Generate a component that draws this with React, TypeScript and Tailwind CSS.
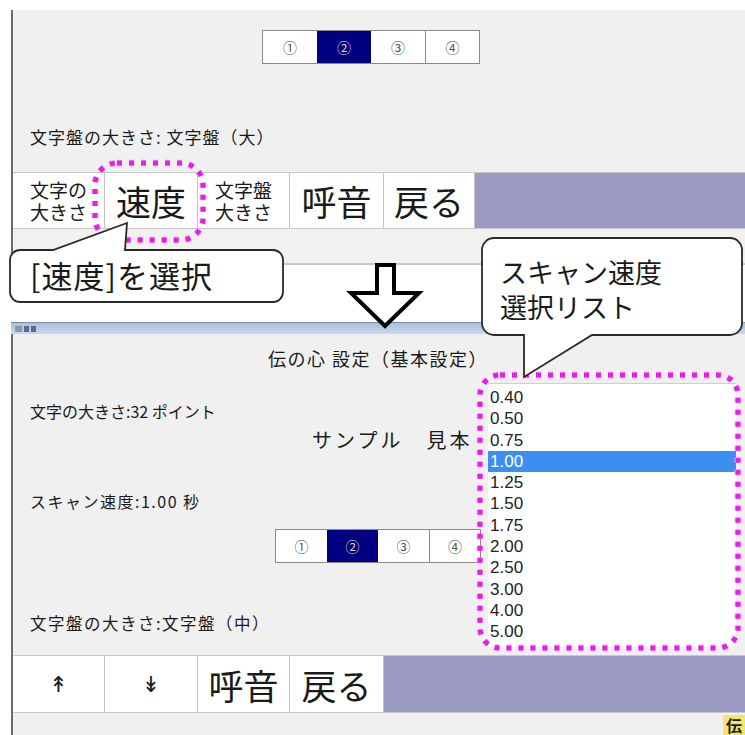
import React from "react";

const jp = { fontFamily: '"Noto Sans CJK JP", "Noto Sans", sans-serif' };
const num = { fontFamily: '"Liberation Sans", Arial, sans-serif' };

function Segmented({ cellW }: { cellW: string }) {
  const items = ["①", "②", "③", "④"];
  return (
    <div className="flex border border-[#8a8a8a] bg-white h-[34px] w-fit">
      {items.map((t, i) => (
        <div
          key={t}
          className={
            (i === 1
              ? "bg-[#000080] text-[#e6dca8] "
              : "bg-white text-[#555] ") +
            (i === 3 ? "border-l border-[#8a8a8a] " : "") +
            cellW +
            " h-full flex items-center justify-center text-[14px]"
          }
          style={jp}
        >
          {t}
        </div>
      ))}
    </div>
  );
}

function Btn({ w, children }: { w: string; children: React.ReactNode }) {
  return (
    <div
      className={
        w +
        " h-full bg-white border-r border-[#c4c4c4] flex items-center justify-center text-[#1a1a1a] shrink-0"
      }
      style={jp}
    >
      {children}
    </div>
  );
}

export default function App() {
  const values = [
    "0.40",
    "0.50",
    "0.75",
    "1.00",
    "1.25",
    "1.50",
    "1.75",
    "2.00",
    "2.50",
    "3.00",
    "4.00",
    "5.00",
  ];
  return (
    <div className="relative w-[745px] h-[735px] bg-white overflow-hidden text-[#1a1a1a]" style={jp}>
      {/* Window 1 */}
      <div className="pt-[10px] pl-[11px]">
        <div className="border-l-2 border-[#6b6b6b] bg-[#f0f0f0] h-[255px] flex flex-col border-b-2 border-b-[#c2c6ce]">
          <div className="mt-[20px] pl-[249px]">
            <Segmented cellW="w-[54px]" />
          </div>
          <div className="mt-[63px] pl-[17px] h-[20px] leading-[20px] text-[17px] tracking-[1px]">
            文字盤の大きさ: 文字盤（大）
          </div>
          <div className="mt-[25px] h-[57px] flex border-y border-[#c8c8c8]">
            <Btn w="w-[92px]">
              <div className="text-[19px] leading-[22px] text-center">
                文字の
                <br />
                大きさ
              </div>
            </Btn>
            <Btn w="w-[93px]">
              <span className="text-[35px] leading-none">速度</span>
            </Btn>
            <Btn w="w-[92px]">
              <div className="text-[19px] leading-[22px] text-center">
                文字盤
                <br />
                大きさ
              </div>
            </Btn>
            <Btn w="w-[94px]">
              <span className="text-[35px] leading-none">呼音</span>
            </Btn>
            <Btn w="w-[91px]">
              <span className="text-[35px] leading-none">戻る</span>
            </Btn>
            <div className="flex-1 bg-[#9b9ac2]" />
          </div>
          <div className="flex-1 bg-[#f3f0f0]" />
        </div>
      </div>

      {/* gap */}
      <div className="h-[57px]" />

      {/* Window 2 */}
      <div className="pl-[11px]">
        <div className="h-[12px] border-t border-[#7d8ca4] bg-gradient-to-b from-[#a9bfdc] to-[#c9d8ec] flex items-center gap-[2px] pl-[4px]">
          <div className="w-[7px] h-[6px] bg-[#8c98a8]" />
          <div className="w-[5px] h-[6px] bg-[#5a6a90]" />
          <div className="w-[5px] h-[6px] bg-[#5a6a90]" />
        </div>
        <div className="border-l-2 border-[#6b6b6b] bg-[#f0f0f0] h-[401px] flex flex-col">
          <div className="mt-[12px] pl-[255px] h-[24px] leading-[24px] text-[18px] tracking-[1.5px]">
            伝の心 設定（基本設定）
          </div>
          <div className="mt-[31px] pl-[17px] h-[20px] leading-[20px] text-[16px]">
            文字の大きさ:32 ポイント
          </div>
          <div className="mt-[6px] pl-[299px] h-[26px] leading-[26px] text-[20px] tracking-[3px]">
            サンプル　見本
          </div>
          <div className="mt-[38px] pl-[17px] h-[20px] leading-[20px] text-[16px] tracking-[1.5px]">
            スキャン速度:1.00 秒
          </div>
          <div className="mt-[18px] pl-[262px]">
            <Segmented cellW="w-[51px]" />
          </div>
          <div className="mt-[50px] pl-[17px] h-[20px] leading-[20px] text-[16.5px] tracking-[1.5px]">
            文字盤の大きさ:文字盤（中）
          </div>
          <div className="mt-[22px] h-[58px] flex border-y border-[#c8c8c8]">
            <Btn w="w-[92px]">
              <span className="text-[22px]" style={{ fontFamily: '"DejaVu Sans", sans-serif' }}>
                ↟
              </span>
            </Btn>
            <Btn w="w-[93px]">
              <span className="text-[22px]" style={{ fontFamily: '"DejaVu Sans", sans-serif' }}>
                ↡
              </span>
            </Btn>
            <Btn w="w-[92px]">
              <span className="text-[35px] leading-none">呼音</span>
            </Btn>
            <Btn w="w-[94px]">
              <span className="text-[35px] leading-none">戻る</span>
            </Btn>
            <div className="flex-1 bg-[#9b9ac2]" />
          </div>
          <div className="flex-1 flex justify-end items-end">
            <div className="bg-[#f3e56a] h-[20px] w-[22px] text-[16px] font-bold leading-[20px] text-center">
              伝
            </div>
          </div>
        </div>
      </div>

      {/* Dropdown list */}
      <div className="absolute left-[488px] top-[383px] w-[248px] h-[263px] bg-white border-t border-[#cfcfcf] pt-[3px]" style={num}>
        {values.map((v) => (
          <div
            key={v}
            className={
              (v === "1.00" ? "bg-[#3a8ff0] text-white " : "text-[#222] ") +
              "h-[21.3px] leading-[21.3px] text-[17px] pl-[2px]"
            }
          >
            {v}
          </div>
        ))}
      </div>

      {/* Annotations */}
      <svg className="absolute left-0 top-0 pointer-events-none" width="745" height="735" viewBox="0 0 745 735">
        <rect x="95" y="163" width="108" height="77" rx="22" fill="none" stroke="#f6b8f6" strokeWidth="7" strokeDasharray="5 7" />
        <rect x="95" y="163" width="108" height="77" rx="22" fill="none" stroke="#e81ce8" strokeWidth="5" strokeDasharray="5 7" />
        <rect x="480" y="375" width="258" height="273" rx="20" fill="none" stroke="#f6b8f6" strokeWidth="7" strokeDasharray="5 7" />
        <rect x="480" y="375" width="258" height="273" rx="20" fill="none" stroke="#e81ce8" strokeWidth="5" strokeDasharray="5 7" />
        <path
          d="M 20 250 H 53 L 127 223 L 125 250 H 273 A 10 10 0 0 1 283 260 V 292 A 10 10 0 0 1 273 302 H 20 A 10 10 0 0 1 10 292 V 260 A 10 10 0 0 1 20 250 Z"
          fill="white"
          stroke="#2a2a2a"
          strokeWidth="1.8"
        />
        <path
          d="M 494 238 H 730 A 12 12 0 0 1 742 250 V 323 A 12 12 0 0 1 730 335 H 592 L 524 377 L 524 335 H 494 A 12 12 0 0 1 482 323 V 250 A 12 12 0 0 1 494 238 Z"
          fill="white"
          stroke="#2a2a2a"
          strokeWidth="1.8"
        />
        <polygon
          points="377,265 394,265 394,293 419,293 385,326 351,293 377,293"
          fill="white"
          stroke="#000"
          strokeWidth="4"
          strokeLinejoin="miter"
        />
      </svg>

      {/* Callout texts */}
      <div className="absolute left-[30px] top-[256px] text-[31px] leading-[38px] tracking-[1px] text-[#1a1a1a]" style={jp}>
        [速度]を選択
      </div>
      <div className="absolute left-[500px] top-[254px] text-[27px] leading-[35px] text-[#1a1a1a]" style={jp}>
        スキャン速度
        <br />
        選択リスト
      </div>
    </div>
  );
}
